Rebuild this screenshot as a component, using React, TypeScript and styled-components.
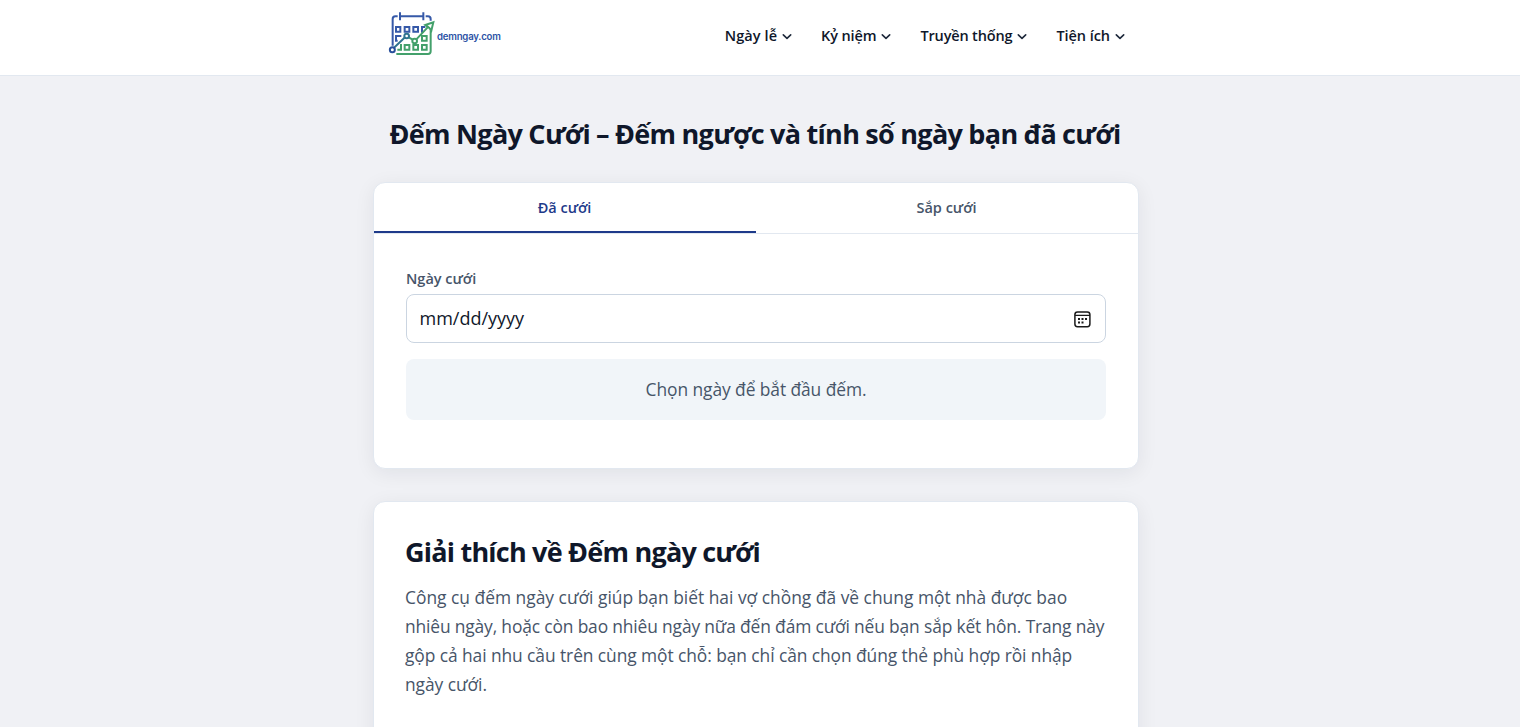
import React from 'react';
import styled, { createGlobalStyle } from 'styled-components';

const GlobalStyle = createGlobalStyle`
  *, *::before, *::after { box-sizing: border-box; }
  body {
    margin: 0;
    background: #f0f1f5;
    color: #0f172a;
    font-family: "Open Sans", "Noto Sans", sans-serif;
  }
  h1, h2, p { margin: 0; }
`;

const Page = styled.div`
  height: 727px;
  overflow: hidden;
`;

const Header = styled.header`
  height: 76px;
  padding-right: 8px;
  background: #fff;
  border-bottom: 1px solid #e2e8f0;
`;

const HeaderInner = styled.div`
  width: 738px;
  height: 72px;
  margin: 0 auto;
  padding-left: 1px;
  display: flex;
  align-items: center;
  justify-content: space-between;
`;

const Brand = styled.a`
  display: flex;
  align-items: center;
  margin-top: -5px;
`;

const BrandName = styled.span`
  margin: 6px 0 0 1px;
  font: 600 9.6px/12px Inter, sans-serif;
  letter-spacing: -0.2px;
  color: #2d53a5;
`;

const Nav = styled.nav`
  display: flex;
  gap: 28px;
  margin-right: -1px;
`;

const NavItem = styled.a<{ $spacing: number }>`
  display: flex;
  align-items: center;
  gap: 4px;
  font-size: 14.5px;
  font-weight: 600;
  line-height: 24px;
  letter-spacing: ${(p) => p.$spacing}px;
  white-space: nowrap;
`;

const Main = styled.main`
  padding-right: 8px;
  display: flex;
  flex-direction: column;
  align-items: center;
`;

const Title = styled.h1`
  margin: 38px 2px 0 0;
  height: 68px;
  font-size: 27px;
  font-weight: 700;
  line-height: 40px;
  letter-spacing: -0.63px;
  word-spacing: -0.4px;
  text-align: center;
  white-space: nowrap;
`;

const Card = styled.section`
  width: 766px;
  background: #fff;
  border: 1px solid #e2e8f0;
  border-radius: 12px;
  margin-bottom: 32px;
  box-shadow: 0 4px 20px rgba(15, 23, 42, 0.07);
  overflow: hidden;
  flex: none;
`;

const Tabs = styled.div`
  display: flex;
  height: 51px;
  border-bottom: 1px solid #e2e8f0;
`;

const Tab = styled.div<{ $active?: boolean }>`
  flex: 1;
  display: flex;
  align-items: center;
  justify-content: center;
  padding-right: 1px;
  border-bottom: 2px solid ${(p) => (p.$active ? '#1e3a8a' : 'transparent')};
  color: ${(p) => (p.$active ? '#1e3a8a' : '#475569')};
  font-size: 14.5px;
  font-weight: 600;
`;

const Panel = styled.div`
  height: 234px;
  padding: 32px 32px 0;
`;

const Label = styled.div`
  height: 28px;
  font-size: 14.5px;
  font-weight: 600;
  line-height: 26px;
  color: #475569;
`;

const DateField = styled.div`
  height: 49px;
  padding: 0 14px 2px 12.5px;
  display: flex;
  align-items: center;
  justify-content: space-between;
  border: 1px solid #cbd5e1;
  border-radius: 8px;
  font-size: 18px;

  svg { margin-top: 3px; }
`;

const Result = styled.p`
  height: 61px;
  margin-top: 16px;
  padding-bottom: 2px;
  display: flex;
  align-items: center;
  justify-content: center;
  border-radius: 8px;
  background: #f1f5f9;
  color: #475569;
  font-size: 17.4px;
  letter-spacing: -0.08px;
`;

const Article = styled.div`
  height: 300px;
  padding: 30px 31px;
`;

const Heading = styled.h2`
  font-size: 27px;
  font-weight: 700;
  line-height: 40px;
  letter-spacing: -0.78px;
`;

const Paragraph = styled.p`
  margin-top: 11px;
  color: #475569;
  font-size: 17.4px;
  line-height: 29px;
`;

const Line = styled.span<{ $spacing: number }>`
  display: block;
  white-space: nowrap;
  letter-spacing: ${(p) => p.$spacing}px;
`;

const Chevron = () => (
  <svg width="12" height="12" viewBox="0 0 12 12" fill="none" stroke="#1e293b" strokeWidth="1.6" strokeLinecap="round" strokeLinejoin="round">
    <path d="M2.3 4.9 6 8.4l3.7-3.5" />
  </svg>
);

const Logo = () => (
  <svg width="48" height="46" viewBox="24 22 144 138" fill="none" strokeWidth="6">
    <g stroke="#3659a8">
      <path d="M38 126V46q0-8 8-8h7M60 38h70M60 26v24M130 26v24M137 38h7q8 0 8 8v5" />
      <path d="M48 70h13v14H48zM74 70h14v14H74zM100 70h14v14h-14zM136 70h-10v14h3M64 97H48v14h5" />
    </g>
    <g stroke="#43a06b">
      <path d="M152 80v63q0 8-8 8H49" />
      <path d="M140 97h-14v14h14zM60 124h3v14h-11M74 124h14v14H74zM100 124h14v14h-14zM126 124h14v14h-14z" />
      <path d="m86 101 12 7M109 107l36-38" />
      <path d="m136 64 24-8-6 25-6-8-5-4z" fill="#fff" />
      <circle cx="104" cy="112" r="7" fill="#fff" />
    </g>
    <g stroke="#2f7390">
      <path d="m42 132 33-31" />
      <circle cx="80" cy="97" r="7" fill="#fff" />
    </g>
    <circle cx="37" cy="138" r="7.5" stroke="#294f9b" fill="#fff" />
  </svg>
);

const CalendarIcon = () => (
  <svg width="17" height="17" viewBox="0 0 17 17" fill="none">
    <rect x="0.9" y="0.9" width="15" height="14.8" rx="2.6" stroke="#1a1a1a" strokeWidth="1.5" />
    <path d="M1 4.4h15" stroke="#1a1a1a" strokeWidth="1.3" />
    <path d="M4 7h2v2H4zM7.5 7h2v2h-2zM11 7h2v2h-2zM4 10.5h2v2H4zM7.5 10.5h2v2h-2z" fill="#1a1a1a" />
  </svg>
);

const menu: [string, number][] = [
  ['Ngày lễ', 0.08],
  ['Kỷ niệm', -0.12],
  ['Truyền thống', -0.16],
  ['Tiện ích', -0.05],
];

const lines: [string, number][] = [
  ['Công cụ đếm ngày cưới giúp bạn biết hai vợ chồng đã về chung một nhà được bao', 0],
  ['nhiêu ngày, hoặc còn bao nhiêu ngày nữa đến đám cưới nếu bạn sắp kết hôn. Trang này', -0.15],
  ['gộp cả hai nhu cầu trên cùng một chỗ: bạn chỉ cần chọn đúng thẻ phù hợp rồi nhập', -0.08],
  ['ngày cưới.', -0.05],
];

export default function App() {
  return (
    <Page>
      <GlobalStyle />
      <Header>
        <HeaderInner>
          <Brand>
            <Logo />
            <BrandName>demngay.com</BrandName>
          </Brand>
          <Nav>
            {menu.map(([item, spacing]) => (
              <NavItem key={item} $spacing={spacing}>
                {item}
                <Chevron />
              </NavItem>
            ))}
          </Nav>
        </HeaderInner>
      </Header>
      <Main>
        <Title>Đếm Ngày Cưới – Đếm ngược và tính số ngày bạn đã cưới</Title>
        <Card>
          <Tabs>
            <Tab $active>Đã cưới</Tab>
            <Tab>Sắp cưới</Tab>
          </Tabs>
          <Panel>
            <Label>Ngày cưới</Label>
            <DateField>
              mm/dd/yyyy
              <CalendarIcon />
            </DateField>
            <Result>Chọn ngày để bắt đầu đếm.</Result>
          </Panel>
        </Card>
        <Card>
          <Article>
            <Heading>Giải thích về Đếm ngày cưới</Heading>
            <Paragraph>
              {lines.map(([text, spacing]) => (
                <Line key={text} $spacing={spacing}>{text}</Line>
              ))}
            </Paragraph>
          </Article>
        </Card>
      </Main>
    </Page>
  );
}
